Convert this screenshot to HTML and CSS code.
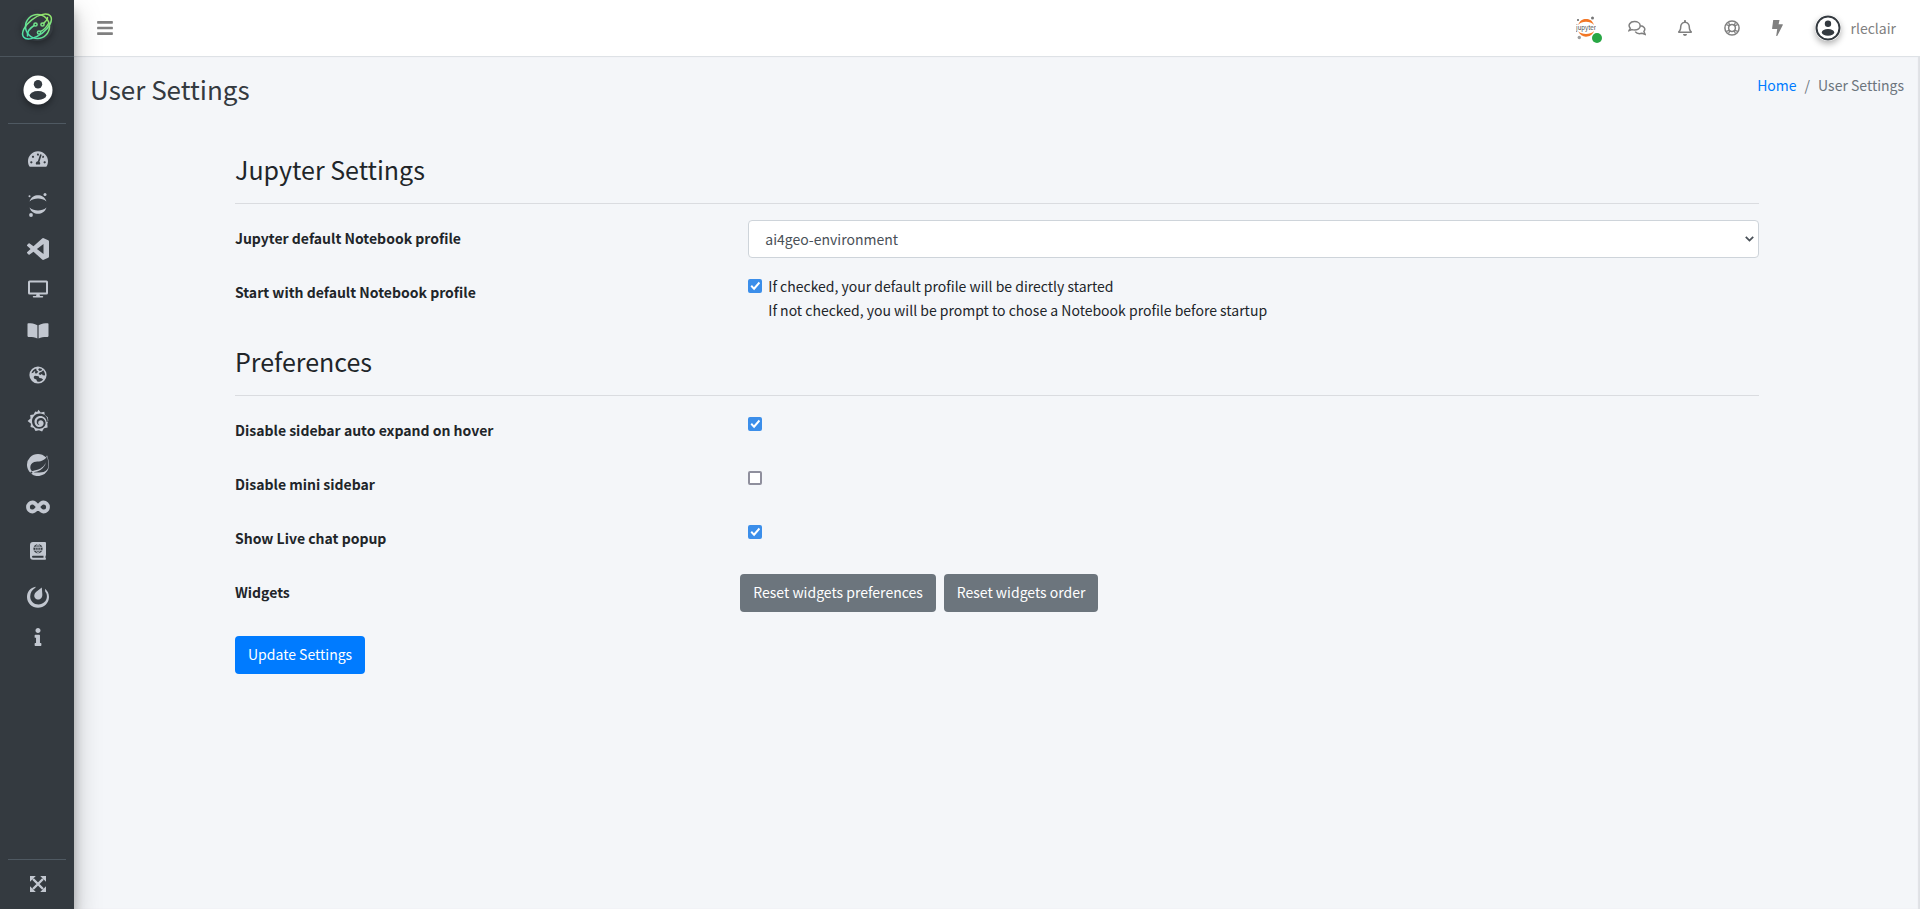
FILE: index.html
```
<!DOCTYPE html>
<html lang="en">
<head>
<meta charset="utf-8">
<title>User Settings</title>
<link rel="stylesheet" href="styles.css">
</head>
<body>
<div class="app">
  <aside class="sidebar">
    <a class="brand" href="#" aria-label="Dashboard home">
      <svg class="brand-logo" viewBox="0 0 32 28" width="32" height="28" stroke="url(#leaf)" stroke-width="1.500" stroke-linecap="round">
        <defs><linearGradient id="leaf" gradientUnits="userSpaceOnUse" x1="4" y1="26" x2="28" y2="3"><stop offset="0" stop-color="#3fe0b8"/><stop offset="1" stop-color="#9be564"/></linearGradient></defs>
        <circle cx="16.500" cy="13.500" r="12"/>
        <ellipse cx="16" cy="13.500" rx="17" ry="8.500" transform="rotate(-38 16 13.500)"/>
        <path d="M13.200 12.500C9 15 6 19 6.500 23"/>
        <path d="M22.500 10.500C24.500 8.500 26.500 7 26.500 4.500"/>
        <path d="M19.500 18.500C23 17 25.500 14 27.500 10.500"/>
        <circle cx="14.500" cy="11.500" r="1.600"/><circle cx="21.500" cy="11.500" r="1.600"/><circle cx="18" cy="19.500" r="1.600"/>
      </svg>
    </a>
    <div class="user-panel">
      <a class="avatar" href="#" aria-label="Profile">
        <svg viewBox="0 0 30 30" width="30" height="30"><circle cx="15" cy="15" r="14.500" fill="#fff"/><circle cx="15" cy="9.300" r="4.200" fill="#343a40"/><ellipse cx="15" cy="20.500" rx="8.300" ry="4.400" fill="#343a40"/></svg>
      </a>
    </div>
    <nav class="side-nav" aria-label="Main">
      <a class="side-link" href="#" aria-label="Dashboard"><svg viewBox="0 0 576 512" width="20" height="18"><path d="M288 32C128.940 32 0 160.940 0 320c0 52.800 14.250 102.260 39.060 144.800 5.610 9.620 16.300 15.200 27.440 15.200h443c11.140 0 21.830-5.580 27.440-15.200C561.750 422.260 576 372.800 576 320c0-159.060-128.940-288-288-288zm0 64c14.710 0 26.580 10.130 30.320 23.650-1.110 2.260-2.640 4.230-3.450 6.670l-9.220 27.670c-5.130 3.490-10.970 6.010-17.640 6.010-17.670 0-32-14.330-32-32S270.330 96 288 96zM96 384c-17.670 0-32-14.330-32-32s14.330-32 32-32 32 14.330 32 32-14.330 32-32 32zm48-160c-17.670 0-32-14.330-32-32s14.330-32 32-32 32 14.330 32 32-14.330 32-32 32zm246.770-72.410l-61.330 184C343.130 347.330 352 364.540 352 384c0 11.720-3.380 22.550-8.880 32H232.880c-5.500-9.450-8.880-20.280-8.880-32 0-33.940 26.500-61.430 59.900-63.590l61.340-184.010c4.170-12.560 17.730-19.450 30.360-15.170 12.570 4.190 19.350 17.790 15.170 30.360zm14.660 57.200l15.520-46.550c3.470-1.290 7.130-2.230 11.050-2.230 17.670 0 32 14.330 32 32s-14.330 32-32 32c-11.380-.010-20.890-6.280-26.570-15.220zM480 384c-17.670 0-32-14.330-32-32s14.330-32 32-32 32 14.330 32 32-14.330 32-32 32z"/></svg></a>
      <a class="side-link tall" href="#" aria-label="Jupyter"><svg viewBox="0 0 20 26" width="20" height="26"><path d="M1.500 9.500C3 5 6.500 3.200 10 3.200s7 1.800 8.500 6.300C16 7.300 13 6.600 10 6.600s-6 .7-8.500 2.900zM1.500 15.500C3 20 6.500 21.800 10 21.800s7-1.800 8.500-6.300C16 17.700 13 18.400 10 18.400s-6-.7-8.500-2.900z"/><circle cx="17" cy="2.500" r="1.500"/><circle cx="1.500" cy="4.200" r="1"/><circle cx="3" cy="23" r="1.900"/></svg></a>
      <a class="side-link short" href="#" aria-label="Code editor"><svg viewBox="0 0 24 24" width="22" height="22"><path d="M23.150 2.587L18.210.210a1.494 1.494 0 0 0-1.705.290l-9.460 8.630-4.120-3.128a.999.999 0 0 0-1.276.057L.327 7.261A1 1 0 0 0 .326 8.740L3.899 12 .326 15.260a1 1 0 0 0 .001 1.479L1.650 17.940a.999.999 0 0 0 1.276.057l4.120-3.128 9.460 8.630a1.492 1.492 0 0 0 1.704.290l4.942-2.377A1.500 1.500 0 0 0 24 20.060V3.939a1.500 1.500 0 0 0-.850-1.352zm-5.146 14.861L10.826 12l7.178-5.448v10.896z"/></svg></a>
      <a class="side-link short" href="#" aria-label="Remote desktop"><svg viewBox="0 0 20 18" width="20" height="18"><path fill-rule="evenodd" d="M1.500.500h17A1.500 1.500 0 0 1 20 2v11a1.500 1.500 0 0 1-1.500 1.500h-7l.5 1.500h2.500q.7 0 .7.700t-.7.800h-9q-.7 0-.7-.8t.7-.7H8l.500-1.500h-7A1.500 1.500 0 0 1 0 13V2A1.500 1.500 0 0 1 1.500.500zM2 2.500v10h16v-10z"/></svg></a>
      <a class="side-link" href="#" aria-label="Documentation"><svg viewBox="0 0 22 18" width="22" height="18"><path d="M10.400 3.200v13.300C7.500 14.700 4 14.900 1.300 14.900q-.8 0-.8-.8V2q0-.8.800-.8C4 1.200 7.500 1.500 10.400 3.200zM11.600 3.200v13.300c2.900-1.800 6.400-1.600 9.100-1.600q.8 0 .8-.8V2q0-.8-.8-.8c-2.700 0-6.200.3-9.100 2z"/></svg></a>
      <a class="side-link" href="#" aria-label="Maps"><svg viewBox="0 0 18 18" width="18" height="18"><circle cx="9" cy="9" r="8.600"/><path class="hole" d="M7.200 2.500C4.800 3.200 3 5 2.400 7.200l1.800-.4 1.200-1.600 1 .4-.6 1.600 1.700.3L9.300 5.800 7.600 4.600zM10 2.300l-.8 1.500 1.500 1.300 1.800-.6.600-1.400zM14.200 4.200l-1.600 1.600-2 .6-1 1.600 1.600 1 1.700-1 .9 1.300 2 .3.300-1.400c-.3-1.600-.9-2.900-1.900-4zM6 9.800c-1.300.5-1.700 1.900-.6 2.900l2 .7.700 2.200c2.300.4 4.700-.5 6-2.200l-1.700-1.200-2-.3-.8-1.700z"/></svg></a>
      <a class="side-link tall" href="#" aria-label="Grafana"><svg viewBox="0 0 22 24" width="22" height="24"><path d="M11.500.800l2.200 2.600 3.600-.7.500 3.300 3 2.300.5 3.200-1 3.200.3 3.800-3.600.8-1.900 3.200-3.100-1.300-3.500.9-1.600-3-3.400-1 .5-3.300L.600 12l2.900-2.600-.3-3.400 3.400-.6 1.600-2.800 2 .4z"/><path class="hole" d="M20.800 13c.3-5-3.300-8.500-7.800-8.500-4.600 0-8 3.500-8 7.800 0 4.200 3.200 7.500 7.300 7.500 3.600 0 6.200-2.500 6.300-5.700 0-2.900-2.200-5-4.900-5-2.300 0-4 1.700-4 3.800 0 1.900 1.300 3.200 3 3.200-1-.5-1.500-1.400-1.500-2.400 0-1.400 1.100-2.500 2.500-2.500 1.700 0 2.900 1.300 2.900 3.100 0 2.100-1.800 3.700-4.100 3.700-2.900 0-5-2.300-5-5.300 0-3.300 2.500-5.800 5.800-5.800 3.500 0 6.100 2.600 6.300 6z"/></svg></a>
      <a class="side-link short" href="#" aria-label="Spring"><svg viewBox="0 0 24 24" width="22" height="22"><path d="M21.854 1.416a10.450 10.450 0 0 1-1.284 2.247A11.967 11.967 0 1 0 3.852 20.776l.444.395a11.954 11.954 0 0 0 19.632-8.297c.346-3.013-.568-6.865-2.074-11.458zM5.580 20.875a1.017 1.017 0 1 1-.148-1.432 1.040 1.040 0 0 1 .148 1.432zm16.200-3.581c-2.939 3.926-9.260 2.593-13.285 2.790 0 0-.716.050-1.432.148 0 0 .272-.123.617-.247 2.840-.988 4.173-1.185 5.902-2.074 3.235-1.655 6.470-5.284 7.112-9.038-1.235 3.605-4.988 6.717-8.396 7.976-2.346.864-6.569 1.704-6.569 1.704l-.173-.099c-2.865-1.408-2.963-7.630 2.272-9.631 2.297-.889 4.470-.395 6.964-.988 2.642-.617 5.704-2.593 6.939-5.186 1.383 4.173 3.062 10.643.049 14.643z"/></svg></a>
      <a class="side-link" href="#" aria-label="Pipelines"><svg viewBox="0 0 24 14" width="24" height="14"><path class="line" stroke-width="3.800" d="M12 7C10 4 8.500 2.500 6.500 2.500a4.500 4.500 0 0 0 0 9C8.500 11.500 10 10 12 7s3.500-4.500 5.500-4.500a4.500 4.500 0 0 1 0 9C15.500 11.500 14 10 12 7z"/></svg></a>
      <a class="side-link" href="#" aria-label="Catalogue"><svg viewBox="0 0 16 18" width="16" height="18"><path fill-rule="evenodd" d="M3 0h12q1 0 1 1v12q0 .6-.5.900v2.200q.5 0 .5.800t-.8.800H3a3 3 0 0 1-3-3V3a3 3 0 0 1 3-3zm0 13.800q-1 0-1 1t1 1h10.500v-2z"/><circle class="hole" cx="8" cy="6.800" r="4.600"/><path class="line" stroke-width=".8" d="M3.500 5.300h9M3.500 8.300h9M8 2.200v9.200M8 2.200c-3 2-3 7 0 9.200M8 2.200c3 2 3 7 0 9.200"/></svg></a>
      <a class="side-link tall" href="#" aria-label="Mattermost"><svg viewBox="0 0 22 22" width="22" height="22"><path d="M9 .800C3 1.500 0 6 0 11c0 6 5 10.800 11 10.800S22 17 22 11c0-3.300-1.500-6.200-4-8.200l.2 2.700c1.300 1.500 1.700 3 1.700 4.800 0 4.700-3.700 8.200-8.400 8.200S3.200 15 3.200 10.500C3.200 6.500 5.500 3.500 8 2z"/><path d="M14.800 1.500l.5 6.500c.3 3-1.300 5.500-4 5.500-2.500 0-4.300-2-4-4.300.2-1.700 1-2.500 2-3.500z"/></svg></a>
      <a class="side-link last" href="#" aria-label="About"><svg viewBox="0 0 192 512" width="8" height="18"><path d="M20 424.229h20V279.771H20c-11.046 0-20-8.954-20-20V212c0-11.046 8.954-20 20-20h112c11.046 0 20 8.954 20 20v212.229h20c11.046 0 20 8.954 20 20V492c0 11.046-8.954 20-20 20H20c-11.046 0-20-8.954-20-20v-47.771c0-11.046 8.954-20 20-20zM96 0C56.235 0 24 32.235 24 72s32.235 72 72 72 72-32.235 72-72S135.764 0 96 0z"/></svg></a>
    </nav>
    <div class="side-foot">
      <button class="icon-button" type="button" aria-label="Full screen"><svg viewBox="0 0 16 16" width="16" height="16"><path class="line" stroke-width="2.400" d="M3 3l10 10M13 3L3 13"/><path d="M0 0h5.800L0 5.800zM16 0v5.800L10.200 0zM0 16v-5.800L5.800 16zM16 16h-5.800l5.800-5.800z"/></svg></button>
    </div>
  </aside>

  <div class="page">
    <header class="topbar">
      <button class="icon-button" type="button" aria-label="Toggle sidebar"><svg viewBox="0 0 448 512" width="16" height="18"><path d="M16 132h416c8.837 0 16-7.163 16-16V76c0-8.837-7.163-16-16-16H16C7.163 60 0 67.163 0 76v40c0 8.837 7.163 16 16 16zm0 160h416c8.837 0 16-7.163 16-16v-40c0-8.837-7.163-16-16-16H16c-8.837 0-16 7.163-16 16v40c0 8.837 7.163 16 16 16zm0 160h416c8.837 0 16-7.163 16-16v-40c0-8.837-7.163-16-16-16H16c-8.837 0-16 7.163-16 16v40c0 8.837 7.163 16 16 16z"/></svg></button>
      <nav class="top-nav" aria-label="Tools">
        <a class="jupyter" href="#" aria-label="Jupyter server running">
          <svg viewBox="0 0 20 24" width="20" height="24"><path fill="#f37726" d="M2 9C4 4.500 6.500 3 10 3s6.500 1.500 8 6C16 6.500 13 5.800 10 5.800S4 6.500 2 9zM2 15c2 4 4.500 5.700 8 5.700s6.500-1.700 8-5.700c-2 2.200-5 3-8 3s-6-.8-8-3z"/><text x="10" y="13.500" text-anchor="middle" class="logo-text">jupyter</text><circle cx="16.500" cy="2" r="1.500" fill="#767677"/><circle cx="2" cy="4" r="1" fill="#616262"/><circle cx="3.300" cy="21.500" r="1.700" fill="#9e9e9e"/></svg>
          <span class="status"></span>
        </a>
        <a href="#" aria-label="Chat"><svg viewBox="0 0 18 16" width="18" height="16"><path class="line" stroke-width="1.500" d="M2.200 8.300C-.4 5 2 1.600 6.500 1.600c3.300 0 5.700 1.800 5.700 4.200S9.800 10 6.500 10c-1 0-1.700-.1-2.500-.4L1 10.700zM12.300 5.700c3.500 0 5.800 3.200 3.600 5.800l1.200 2.800-3.100-1c-3 .9-5.500.1-6.800-1.700"/></svg></a>
        <a href="#" aria-label="Notifications"><svg viewBox="0 0 448 512" width="14" height="16"><path d="M439.390 362.290c-19.320-20.760-55.470-51.990-55.470-154.290 0-77.700-54.480-139.900-127.940-155.160V32c0-17.670-14.320-32-31.980-32s-31.980 14.330-31.980 32v20.840C118.560 68.100 64.080 130.300 64.080 208c0 102.300-36.150 133.530-55.470 154.290-6 6.450-8.660 14.160-8.610 21.710.110 16.400 12.980 32 32.100 32h383.800c19.120 0 32-15.600 32.100-32 .050-7.550-2.610-15.270-8.610-21.710zM67.530 368c21.220-27.970 44.420-74.330 44.530-159.420 0-.200-.060-.380-.060-.580 0-61.860 50.140-112 112-112s112 50.140 112 112c0 .200-.060.380-.060.580.110 85.100 23.310 131.460 44.530 159.420H67.530zM224 512c35.320 0 63.970-28.650 63.970-64H160.030c0 35.350 28.650 64 63.970 64z"/></svg></a>
        <a href="#" aria-label="Support"><svg viewBox="0 0 16 16" width="16" height="16"><g class="line" stroke-width="1.500"><circle cx="8" cy="8" r="7.100"/><circle cx="8" cy="8" r="3.400"/><path stroke-width="1.300" d="M4.600 2.500l1.400 3.200M2.500 4.600l3.200 1.400M11.400 2.500L10 5.700M13.500 4.600l-3.200 1.400M4.600 13.500l1.400-3.200M2.500 11.400l3.200-1.400M11.400 13.500l-1.400-3.200M13.500 11.400l-3.200-1.400"/></g></svg></a>
        <a href="#" aria-label="Quick actions"><svg viewBox="0 0 11 16" width="11" height="16"><path d="M1.200 0h6.300L6.600 4.300H10.500q.6.100.3.700L5.200 16H4.200L5.200 9H.7Q.1 9 .1 8.400z"/></svg></a>
        <a class="account" href="#">
          <svg class="account-icon" viewBox="0 0 26 26" width="26" height="26"><circle cx="13" cy="13" r="11.500" fill="#fff" stroke="#343a40" stroke-width="2"/><circle cx="13" cy="8.700" r="3.200" fill="#343a40"/><ellipse cx="13" cy="17.400" rx="6.200" ry="3.300" fill="#343a40"/></svg>
          <span>rleclair</span>
        </a>
      </nav>
    </header>

    <main class="content">
      <div class="page-head">
        <h1>User Settings</h1>
        <nav class="crumbs" aria-label="Breadcrumb"><a href="#">Home</a><span>/</span><span>User Settings</span></nav>
      </div>
      <form class="settings">
        <section>
          <h2>Jupyter Settings</h2>
          <div class="row">
            <label class="name" for="profile">Jupyter default Notebook profile</label>
            <div class="field">
              <div class="select-box">
                <select id="profile"><option>ai4geo-environment</option></select>
                <svg class="caret" viewBox="0 0 9 6" width="9" height="6"><path class="line" stroke-width="1.800" d="M.8.900l3.700 3.700L8.200.900"/></svg>
              </div>
            </div>
          </div>
          <div class="row">
            <label class="name" for="start">Start with default Notebook profile</label>
            <div class="field check">
              <input type="checkbox" id="start" checked>
              <label for="start">If checked, your default profile will be directly started<br>If not checked, you will be prompt to chose a Notebook profile before startup</label>
            </div>
          </div>
        </section>
        <section>
          <h2>Preferences</h2>
          <div class="row">
            <label class="name" for="hover">Disable sidebar auto expand on hover</label>
            <div class="field check"><input type="checkbox" id="hover" checked></div>
          </div>
          <div class="row">
            <label class="name" for="mini">Disable mini sidebar</label>
            <div class="field check"><input type="checkbox" id="mini"></div>
          </div>
          <div class="row">
            <label class="name" for="chat">Show Live chat popup</label>
            <div class="field check"><input type="checkbox" id="chat" checked></div>
          </div>
          <div class="row">
            <span class="name">Widgets</span>
            <div class="actions">
              <button class="btn" type="button">Reset widgets preferences</button>
              <button class="btn" type="button">Reset widgets order</button>
            </div>
          </div>
        </section>
        <button class="btn primary" type="submit">Update Settings</button>
      </form>
    </main>
  </div>
</div>
</body>
</html>
```
FILE: styles.css
```
* { box-sizing: border-box; }

body {
  margin: 0;
  background: #f4f6f9;
  color: #212529;
  font: 14px/24px "Source Sans Pro", "Noto Sans CJK SC", sans-serif;
}

a { color: inherit; text-decoration: none; }
svg { display: block; fill: currentColor; }
.line { fill: none; stroke: currentColor; }
button, select { font: inherit; }
h1, h2 { margin: 0; font-weight: 400; }

.app { display: flex; min-height: 100vh; }

/* Sidebar */
.sidebar {
  display: flex;
  flex-direction: column;
  flex: none;
  width: 74px;
  z-index: 2;
  background: #343a40;
  color: #c2c7d0;
  box-shadow: 0 14px 28px rgba(0, 0, 0, .25), 0 10px 10px rgba(0, 0, 0, .22);
}

.brand {
  display: flex;
  justify-content: center;
  align-items: center;
  height: 57px;
  padding-bottom: 2px;
  border-bottom: 1px solid #4b545c;
}

.brand-logo { overflow: visible; fill: none; border-radius: 50%; box-shadow: 0 3px 6px rgba(0, 0, 0, .3); }

.user-panel {
  display: flex;
  justify-content: center;
  align-items: center;
  height: 67px;
  margin: 0 8px;
  padding-left: 1px;
  border-bottom: 1px solid #4f5962;
}

.avatar { border-radius: 50%; box-shadow: 0 3px 6px rgba(0, 0, 0, .35); }

.side-nav { flex: 1; padding-top: 13px; }
.side-link { display: flex; align-items: center; justify-content: center; height: 44px; padding-left: 1px; }
.side-link.tall { height: 48px; }
.side-link.short { height: 40px; }
.side-link.last { height: 32px; }
.hole { fill: #343a40; }

.side-foot {
  display: flex;
  justify-content: center;
  margin: 0 8px;
  padding: 16px 0 17px 1px;
  border-top: 1px solid #4f5962;
}

.icon-button { padding: 0; border: 0; background: none; color: inherit; }

/* Top bar */
.page { display: flex; flex-direction: column; flex: 1; min-width: 0; }

.topbar {
  display: flex;
  align-items: center;
  justify-content: space-between;
  height: 57px;
  padding: 0 24px 1px 23px;
  border-bottom: 1px solid #dee2e6;
  background: #fff;
  color: #808080;
}

.top-nav, .top-nav a { display: flex; align-items: center; }
.top-nav { gap: 32px; }
.jupyter { position: relative; }
.logo-text { font: 6px "Noto Sans CJK SC", sans-serif; fill: #4e4e4e; }
.status {
  position: absolute;
  right: -6px;
  bottom: -3px;
  width: 10px;
  height: 10px;
  border-radius: 50%;
  background: #28a745;
}
.account { gap: 10px; }
.account-icon { border-radius: 50%; box-shadow: 0 3px 6px rgba(0, 0, 0, .3); }

/* Content */
.content { flex: 1; padding: 14px 16px; box-shadow: inset -2px 0 1px #dfe1e5; }
.page-head { display: flex; justify-content: space-between; }
h1 { font-size: 26px; line-height: 36px; color: #343a40; }
.crumbs { display: flex; gap: 8px; padding-top: 2px; color: #6c757d; }
.crumbs a { color: #007bff; }

.settings { padding: 45px 145px 0; }
h2 {
  margin-bottom: 16px;
  padding-bottom: 17px;
  border-bottom: 1px solid #dadce0;
  font-size: 25px;
  line-height: 34px;
}

.row { display: flex; margin: 0 -8px 16px; }
section + section { padding-top: 6px; }
.name { flex: none; width: 33.3333%; padding: 6px 8px 8px; font-weight: 700; }
.field { flex: 1; padding: 0 8px; }

.select-box { position: relative; color: #495057; }
select {
  display: block;
  width: 100%;
  height: 38px;
  padding: 0 16px 1px;
  appearance: none;
  border: 1px solid #ced4da;
  border-radius: 4px;
  background: #fff;
  color: inherit;
}
.caret { position: absolute; right: 5px; top: 16px; pointer-events: none; }

.check { display: flex; align-items: flex-start; gap: 6px; }
input[type="checkbox"] {
  display: grid;
  place-items: center;
  flex: none;
  width: 14px;
  height: 14px;
  margin: 5px 0 0;
  appearance: none;
  border: 2px solid #8f8f9d;
  border-radius: 2px;
  background: #fff;
}
input[type="checkbox"]:checked { border-color: #3b8eea; background: #3b8eea; }
input[type="checkbox"]:checked::after {
  content: "";
  width: 10px;
  height: 10px;
  background: #fff;
  clip-path: polygon(2% 54%, 16% 40%, 36% 62%, 84% 8%, 98% 22%, 38% 92%);
}

.actions { display: flex; gap: 8px; }
.btn {
  height: 38px;
  padding: 0 13px 2px;
  border: 0;
  border-radius: 4px;
  background: #6c757d;
  color: #fff;
}
.primary { margin-top: 8px; background: #007bff; }
```
